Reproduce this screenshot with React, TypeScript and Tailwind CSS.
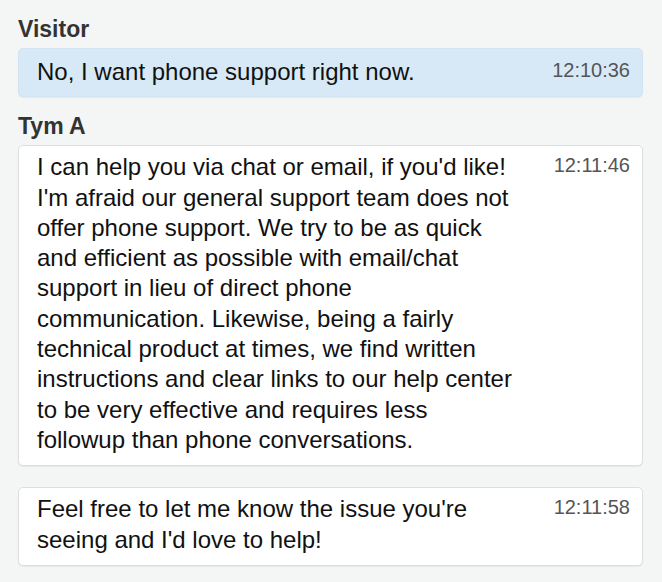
import React from "react";

type Message = { text: string; time: string };

const GROUPS: { author: string; visitor?: boolean; messages: Message[] }[] = [
  {
    author: "Visitor",
    visitor: true,
    messages: [{ text: "No, I want phone support right now.", time: "12:10:36" }],
  },
  {
    author: "Tym A",
    messages: [
      {
        text: "I can help you via chat or email, if you'd like! I'm afraid our general support team does not offer phone support. We try to be as quick and efficient as possible with email/chat support in lieu of direct phone communication. Likewise, being a fairly technical product at times, we find written instructions and clear links to our help center to be very effective and requires less followup than phone conversations.",
        time: "12:11:46",
      },
      {
        text: "Feel free to let me know the issue you're seeing and I'd love to help!",
        time: "12:11:58",
      },
    ],
  },
];

function Bubble({ msg, visitor }: { msg: Message; visitor?: boolean }) {
  return (
    <div
      className={
        visitor
          ? "flex rounded-[5px] border border-[#d2e4f2] bg-[#d7e9f7] pl-[18px] pr-[12px] pt-[8px] pb-[9px] shadow-[0_1px_1px_rgba(0,0,0,0.05)]"
          : "flex rounded-[5px] border border-[#dcdfe2] bg-white pl-[18px] pr-[12px] pt-[6px] pb-[10px] shadow-[0_1px_1px_rgba(0,0,0,0.06)]"
      }
    >
      <p className="w-[481px] text-[24px] leading-[30.3px] text-[#111]">{msg.text}</p>
      <span className="flex-1 text-right text-[20px] leading-[27px] text-[#555]">{msg.time}</span>
    </div>
  );
}

export default function App() {
  return (
    <div
      className="min-h-screen w-full bg-[#f4f5f5] pl-[18px] pr-[19px] pt-[15px]"
      style={{ fontFamily: '"Liberation Sans", Arial, sans-serif' }}
    >
      {GROUPS.map((g, i) => (
        <div key={i} className={i > 0 ? "mt-[15px]" : ""}>
          <div className="mb-[5px] text-[23px] font-bold leading-[28px] text-[#333]">{g.author}</div>
          <div className="flex flex-col gap-[21px]">
            {g.messages.map((m, j) => (
              <Bubble key={j} msg={m} visitor={g.visitor} />
            ))}
          </div>
        </div>
      ))}
    </div>
  );
}
